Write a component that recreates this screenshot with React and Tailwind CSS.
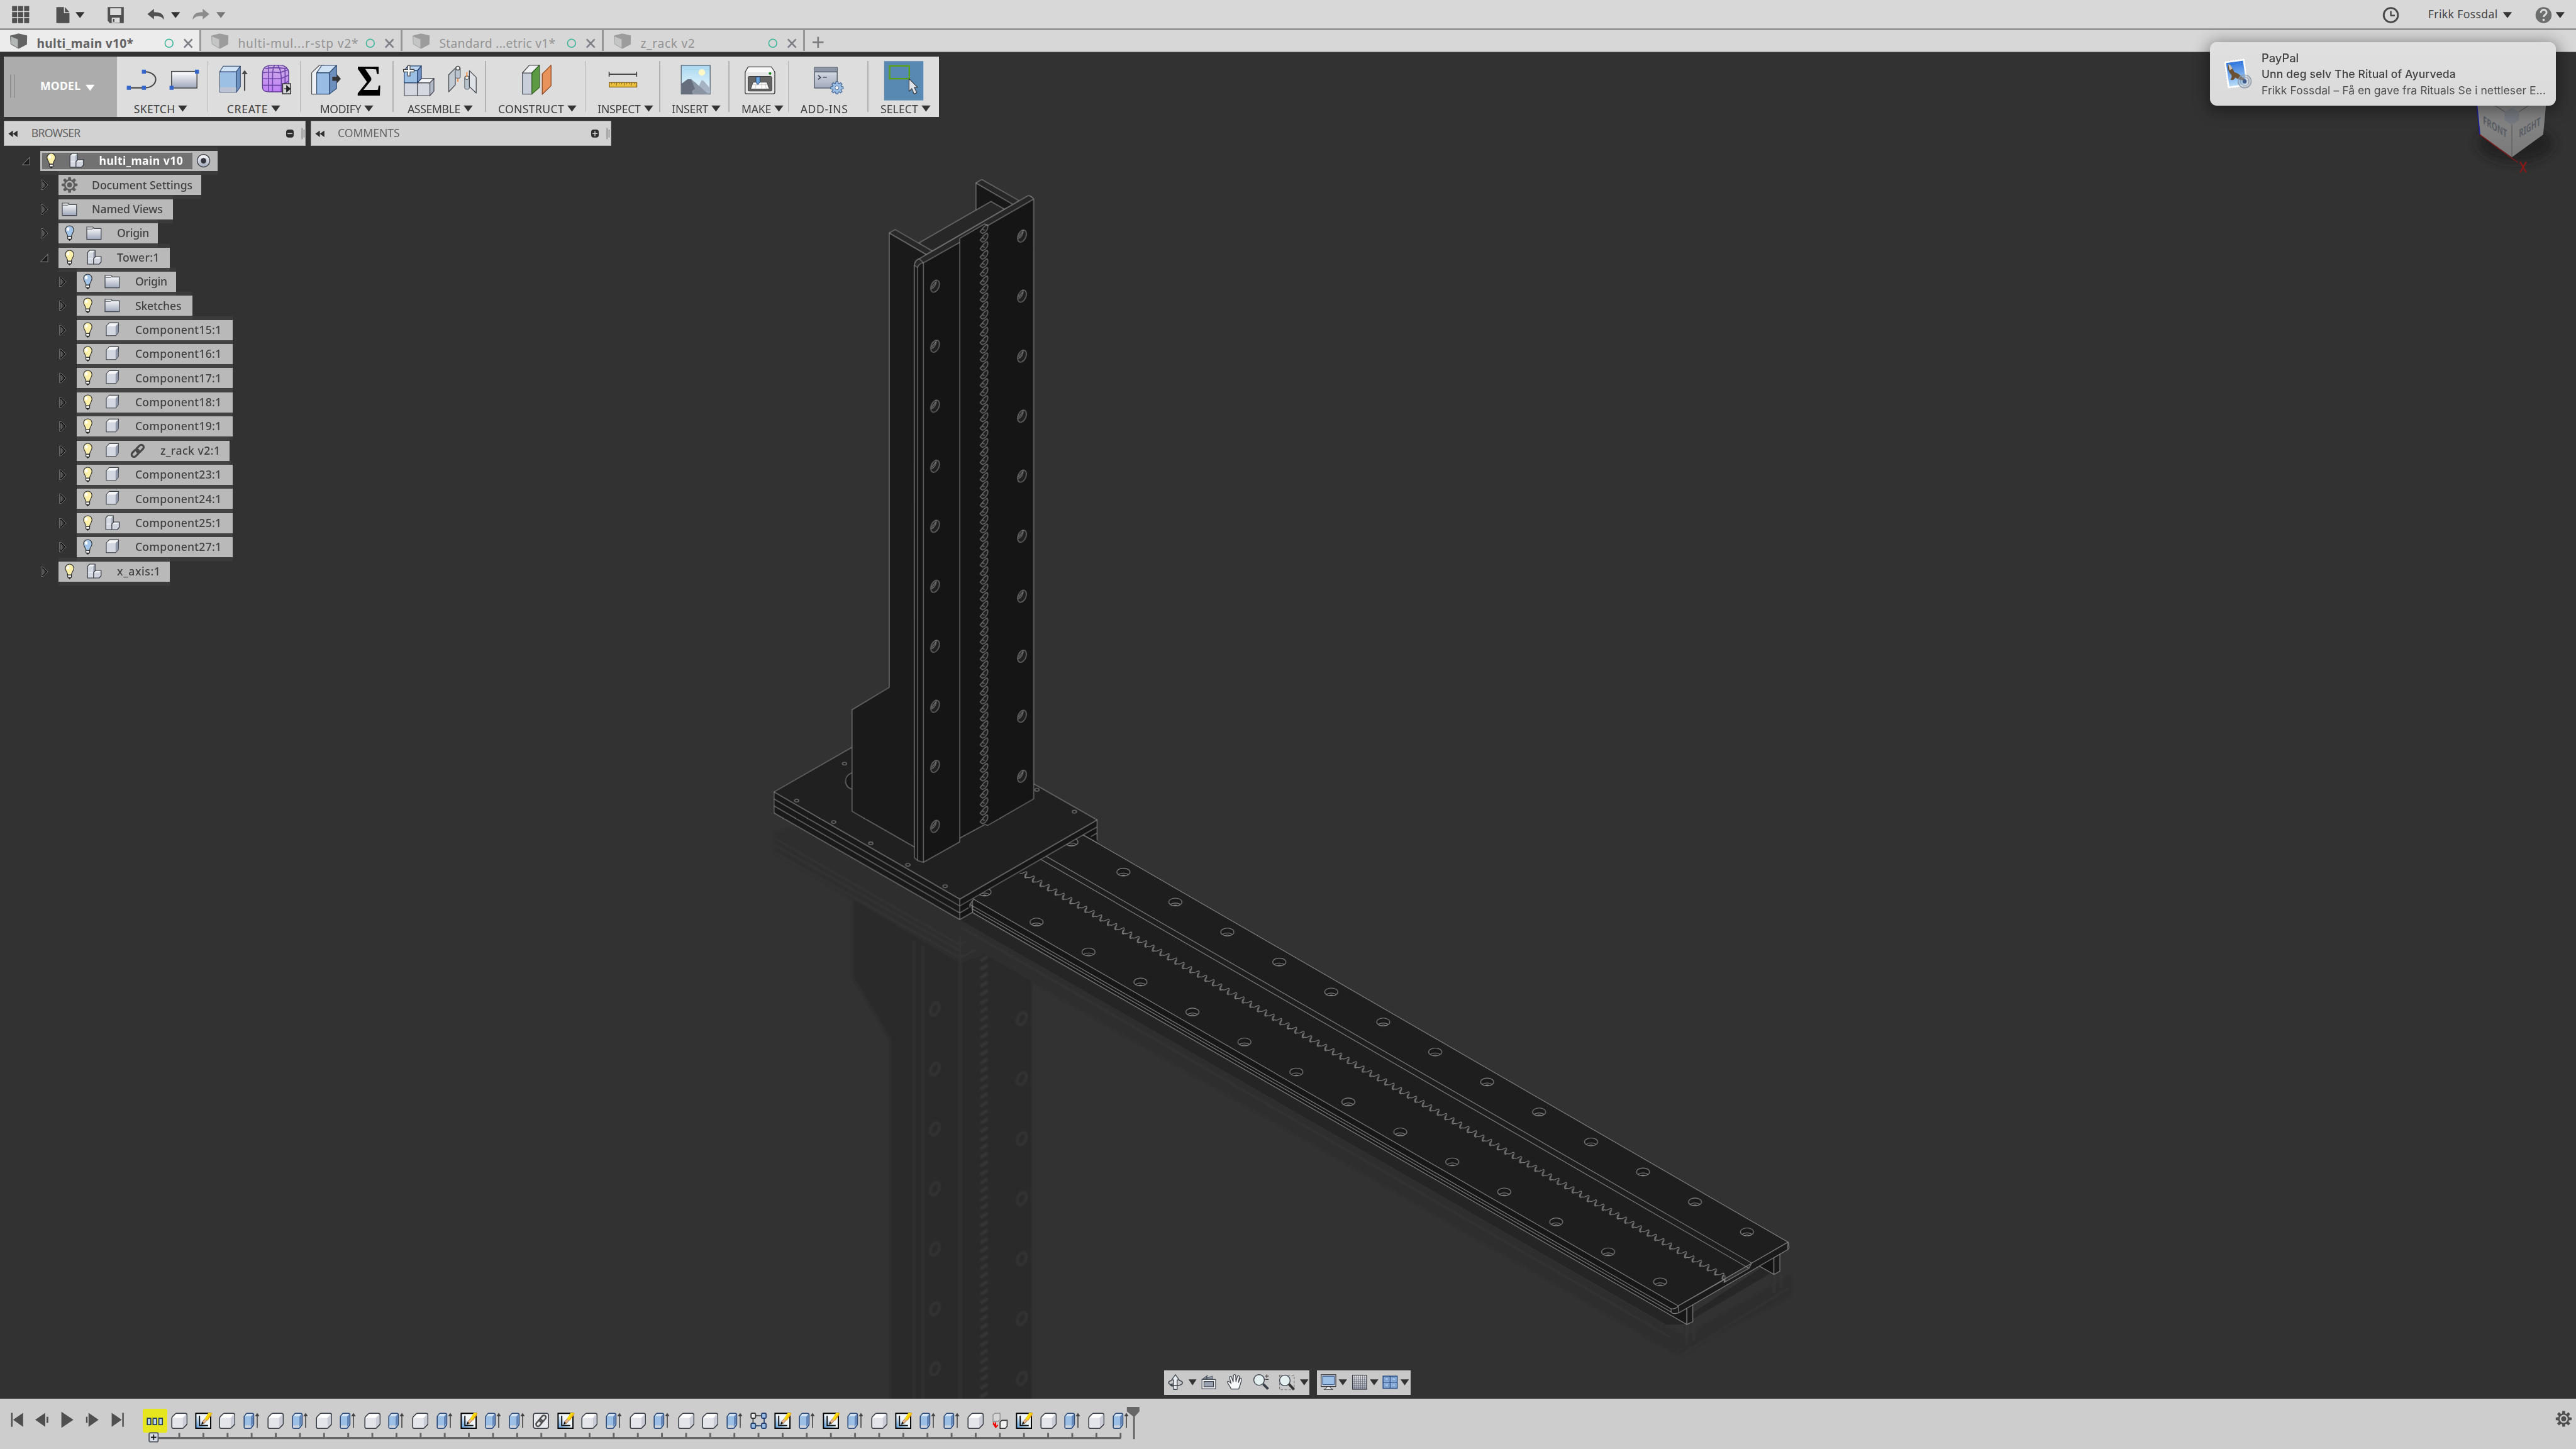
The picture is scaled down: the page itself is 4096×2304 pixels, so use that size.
import React, { useLayoutEffect, useRef, useState } from "react";

const S = 0.8;

/* Vector drawing on the 5120-wide design grid, shown at 0.8. */
function Art({ x = 0, y = 0, w, h, className = "", children }) {
  return (
    <svg
      width={w * S}
      height={h * S}
      viewBox={`${x} ${y} ${w} ${h}`}
      className={"block shrink-0 overflow-visible " + className}
      fill="none"
    >
      {children}
    </svg>
  );
}

/* Text tracked so that it spans a given design width. */
function Fit({ w, className = "", children }) {
  const ref = useRef(null);
  const [ls, setLs] = useState(null);
  useLayoutEffect(() => {
    const nat = ref.current.getBoundingClientRect().width;
    setLs((w * S - nat) / Math.max(1, children.length - 1));
  }, []);
  return (
    <span
      ref={ref}
      className={"inline-block shrink-0 whitespace-nowrap leading-none " + className}
      style={ls === null ? undefined : { letterSpacing: ls + "px", width: w * S + "px" }}
    >
      {children}
    </span>
  );
}

const Tri = ({ x, y, w = 18, h = 12, c = "#333" }) => (
  <path d={`M${x} ${y}h${w}l${-w / 2} ${h}z`} fill={c} />
);

/* ---------- header ---------- */

function Header() {
  return (
    <div className="flex h-[48px] items-start border-b-[3.2px] border-[#969696] bg-[#d8d8d8]">
      <Art x={0} y={0} w={90} h={56}>
        {[0, 1, 2].map((r) =>
          [0, 1, 2].map((c) => (
            <rect key={r + "-" + c} x={24 + c * 12} y={12 + r * 12} width="10" height="10" fill="#505050" />
          ))
        )}
      </Art>
      <Art x={90} y={0} w={100} h={56}>
        <path d="M112 14h15v12h11v20h-26z" fill="#505050" />
        <path d="M129 14l9 10h-9z" fill="#505050" />
        <Tri x={150} y={24} />
      </Art>
      <Art x={190} y={0} w={80} h={56}>
        <path d="M214 14h32v32h-28l-4-5z" fill="#505050" />
        <rect x="219" y="16.500" width="22" height="13.500" fill="#dcdcdc" />
        <rect x="222" y="35" width="16" height="10" fill="#dcdcdc" />
        <rect x="224.500" y="37.500" width="3" height="6" fill="#505050" />
      </Art>
      <Art x={270} y={0} w={100} h={56}>
        <path d="M293 28l13-10.500v6.500c13 0 20 4 20 15.500c-4-6-9-8-20-7.500v6.500z" fill="#505050" />
        <Tri x={340} y={24} />
      </Art>
      <Art x={370} y={0} w={100} h={56}>
        <path d="M416 28l-13-10.500v6.500c-13 0-20 4-20 15.500c4-6 9-8 20-7.500v6.500z" fill="#8c8c8c" />
        <Tri x={430} y={24} c="#777" />
      </Art>
      <div className="ml-auto flex h-[44.8px] items-center">
        <Art x={4720} y={0} w={106} h={56}>
          <circle cx="4752" cy="30" r="14.200" stroke="#4a4a4a" strokeWidth="3.600" />
          <path d="M4752 22v9h8" stroke="#4a4a4a" strokeWidth="3" />
        </Art>
        <Fit w={138} className="mt-[1.600px] text-[17.600px] text-[#454545]">Frikk Fossdal</Fit>
        <Art x={4964} y={0} w={64} h={56}>
          <Tri x={4975} y={24} />
        </Art>
        <Art x={5028} y={0} w={92} h={56}>
          <circle cx="5056" cy="30" r="16" fill="#6c6e6d" />
          <path d="M5050.500 25.500c0-8 11.500-8 11.500-.8c0 4.800-5.800 4.500-5.800 9" stroke="#dcdcdc" strokeWidth="3.600" />
          <circle cx="5056.200" cy="39.500" r="2.400" fill="#dcdcdc" />
          <Tri x={5080} y={24} />
        </Art>
      </div>
    </div>
  );
}

const TABS = [
  { t: "hulti_main v10*", w: 192, on: true },
  { t: "hulti-mul...r-stp v2*", w: 239 },
  { t: "Standard ...etric v1*", w: 231 },
  { t: "z_rack v2", w: 108 },
];

function Tabs() {
  return (
    <div className="flex h-[35.200px] border-b-[1px] border-[#f4f4f4] bg-[#d7d7d7]">
      {TABS.map((t) => (
        <div
          key={t.t}
          className={
            "flex w-[320px] items-start border-r-[3px] border-b border-[#979797] " +
            (t.on ? "bg-[#ececec]" : "bg-[#d7d7d7]")
          }
        >
          <Art x={0} y={60} w={73} h={40} className={t.on ? "" : "opacity-50"}>
            <path d="M20 71l17-4.500l17 4l-.5 18l-16.500 8.500l-15.500-9z" fill="#636363" />
            <path d="M21 72l15 6v18l-14.500-8.500z" fill="#b3b7b6" stroke="#6c6c6c" strokeWidth="1" />
          </Art>
          <Fit
            w={t.w}
            className={"mt-[11px] text-[19.200px] " + (t.on ? "font-bold text-[#636363]" : "text-[#939393]")}
          >
            {t.t}
          </Fit>
          <Art x={320} y={60} w={76} h={40} className="ml-auto">
            <circle cx="336" cy="86" r="8" stroke="#3fb79b" strokeWidth="2" />
            <path d="M366 78l16 16.500M382 78l-16 16.500" stroke="#7f7f88" strokeWidth="3.400" />
          </Art>
        </div>
      ))}
      <div className="flex-1 border-b border-[#979797]">
        <Art x={1600} y={60} w={60} h={40}>
          <path d="M1615 84h22M1626 73v22" stroke="#7f7f83" strokeWidth="3.400" />
        </Art>
      </div>
    </div>
  );
}

/* ---------- toolbar ---------- */

function Group({ x, w, label, lw, pad, tri, art, last }) {
  return (
    <div className="flex h-[96px]">
      <div className="flex flex-col">
        <Art x={x} y={112} w={last ? w : w - 2} h={92}>{art}</Art>
        <div className={"flex h-[20.800px] items-center " + pad}>
          <Fit w={lw} className="text-[17.600px] text-[#3d3d3d]">{label}</Fit>
          {tri && (
            <Art x={0} y={0} w={25} h={26}>
              <Tri x={6.500} y={6} />
            </Art>
          )}
        </div>
      </div>
      {!last && <div className="my-[7.200px] w-[1.600px] bg-[#b2b2b2]" />}
    </div>
  );
}

const sketchArt = (
  <>
    <path d="M255 174h32c14 0 22-8 22-17s-10-15-24-15" stroke="#484848" strokeWidth="2.600" />
    <rect x="340.500" y="141.500" width="50.500" height="33" fill="url(#gPaper)" stroke="#444" strokeWidth="1.800" />
    <g fill="#3466cc">
      <rect x="281.500" y="138" width="8" height="8" />
      <rect x="281.500" y="170" width="8" height="8" />
      <rect x="251.500" y="170" width="8" height="8" />
      <rect x="387" y="138" width="8" height="8" />
      <rect x="336.500" y="170" width="8" height="8" />
    </g>
  </>
);

const createArt = (
  <>
    <g stroke="#3b4d68" strokeWidth="1.300" strokeLinejoin="round">
      <path d="M437 142h33v41h-33z" fill="#9cbfe4" />
      <path d="M437 142l7-11h34l-8 11z" fill="#cfe2f4" stroke="#22406e" />
      <path d="M470 142l8-11v41l-8 11z" fill="#6f92c0" stroke="#22406e" />
    </g>
    <path d="M437.500 173h32v9.500h-32z" fill="#bcc3d2" />
    <path d="M486.500 180v-36" stroke="#484848" strokeWidth="2.600" />
    <path d="M480.500 147l6-8l6 8z" fill="#484848" />
    <path d="M522 147c0-13 6-18 22-18h12c12 0 18 8 18 16v28c0 7-5 9-12 9h-26c-11 0-14-3-14-11z" fill="url(#gPurple)" stroke="#5d3d92" strokeWidth="1.800" />
    <path d="M522 144c16-2 26-1 34 0l18-6M522 156h36l16-7M523 169h36l14-8M534 131v50M546 129c-5 7-4 25-4 53M552 129c8 10 8 25 7 53M566 134c2 10 1 25 0 44M527 136c12-3 30-2 44 0" stroke="#6c43a8" strokeWidth="2" />
    <rect x="562" y="166" width="16" height="20" fill="#d6d6d6" stroke="#333" strokeWidth="2" />
    <path d="M565 176h5v-6l7 6l-7 6v-6" fill="#222" stroke="#222" strokeWidth="1.500" />
  </>
);

const modifyArt = (
  <>
    <g stroke="#2c4770" strokeWidth="1.400" strokeLinejoin="round">
      <path d="M620 144l15-14.500h10l-15 14.500v42.500h-10z" fill="#eef1f5" stroke="#4a4a4a" />
      <path d="M630 144h25v42.500h-25z" fill="#98bce3" />
      <path d="M630 144l10-14.500h29.500l-14.500 14.500z" fill="#cfe2f4" />
      <path d="M655 144l14.500-14.500v46l-14.500 11z" fill="#6c8fbe" />
    </g>
    <path d="M661 152h9v-5l8 9l-8 9v-5h-9z" fill="#333" />
    <text x="709" y="190" fontSize="88" fontWeight="700" textLength="51" lengthAdjust="spacingAndGlyphs" fill="#000" fontFamily='"Liberation Serif", serif'>Σ</text>
  </>
);

const assembleArt = (
  <>
    <g strokeWidth="1.500" strokeLinejoin="round">
      <path d="M803 164h26v25.500h-26z" fill="#d4d7e0" stroke="#40444c" />
      <path d="M829 164h25v25.500h-25z" fill="#d4d7e0" stroke="#40444c" />
      <path d="M829 164l8-8.500h25l-8 8.500z" fill="#f4f5f7" stroke="#40444c" />
      <path d="M854 164l8-8.500v25l-8 9z" fill="#b3b9c6" stroke="#40444c" />
      <path d="M803 140l7-9.500h27l-8 9.500z" fill="#bdd5ef" stroke="#23406e" />
      <path d="M803 140h26v24h-26z" fill="#9cbfe4" stroke="#23406e" />
      <path d="M829 140l8-9.500v25l-8 8.500z" fill="#7293c4" stroke="#23406e" />
      <path d="M810 130h4.500v7.500h8v5h-8v8h-4.500v-8h-8.500v-5h8.500z" fill="#fff" stroke="#444" />
      <path d="M891.500 148l13-13v33l-13 14z" fill="#c4cad2" stroke="#3e434a" />
      <rect x="904.500" y="132" width="10" height="23" rx="4" fill="#b9c3cd" stroke="#6a7076" />
      <circle cx="909.500" cy="135" r="3.800" fill="#fff" stroke="#4a4a4a" />
      <rect x="923" y="151" width="9.500" height="26" rx="4" fill="#b9c3cd" stroke="#6a7076" />
      <circle cx="927.500" cy="154" r="3.500" fill="#fff" stroke="#6a6a6a" />
      <path d="M932.500 140l13.500 13.500v31l-13.500-13z" fill="#dfe3e8" stroke="#3e434a" />
    </g>
    <path d="M909.500 156v6M927.500 143v10" stroke="#ff7a14" strokeWidth="1.800" />
  </>
);

const constructArt = (
  <g strokeWidth="1.500" strokeLinejoin="round">
    <path d="M1038 144.500h19v42h-19z" fill="#c9cedb" stroke="#555a63" />
    <path d="M1038 144.500l14-15.500h20l-15 15.500z" fill="#f0f1f4" stroke="#444" />
    <path d="M1057 144.500l15-15.500v44l-15 13.500z" fill="#5c9b43" stroke="#2f5f20" />
    <path d="M1077.500 146.500l17.500-17.500v41l-17.500 17z" fill="#e8935c" stroke="#8b451b" />
  </g>
);

const inspectArt = (
  <>
    <path d="M1211 142v10M1265.500 142v10M1211 147h54" stroke="#484848" strokeWidth="2.200" />
    <rect x="1211" y="163.500" width="55" height="9" fill="#eac03c" stroke="#7b5a12" strokeWidth="1.500" />
    <path d="M1216 164v3M1221 164v3M1226 164v5M1231 164v3M1236 164v3M1241 164v5M1246 164v3M1251 164v3M1256 164v5M1261 164v3" stroke="#7b5a12" strokeWidth="1.200" />
  </>
);

const insertArt = (
  <>
    <rect x="1353.500" y="129.500" width="57.500" height="57" fill="url(#gSky)" stroke="#53606e" strokeWidth="1.500" />
    <circle cx="1394.500" cy="143.500" r="6.500" fill="#fff7c4" />
    <path d="M1388 172l6-13l4 1l13 15v11h-23z" fill="#a5b3c2" />
    <path d="M1354 166l12-9h7l10 8l24 22h-53z" fill="#666d7c" />
    <path d="M1373 157l10 8l24 22h-30c-4-6-2-8 4-11z" fill="#8b94a3" />
  </>
);

const makeArt = (
  <>
    <path d="M1481 143l6-10.500h46l7 10.500v40q0 3-3 3h-53q-3 0-3-3z" fill="#e6e6e6" stroke="#3d3d3d" strokeWidth="1.700" />
    <path d="M1482 143l6-9.500h45l6 9.500z" fill="#f8f8f8" />
    <circle cx="1530.500" cy="145.500" r="2.600" fill="#158a1c" />
    <rect x="1487" y="151.500" width="47" height="29" rx="3" fill="#646464" stroke="#3d3d3d" strokeWidth="1.300" />
    <path d="M1497 163h27l5 13.500h-37z" fill="#fff" stroke="#333" strokeWidth="1" />
    <path d="M1504 163l-3 13M1514 163v13M1520 163l3 13M1495 168h31" stroke="#bbb" strokeWidth="1" />
    <path d="M1502.500 152.500h8v10l-4 5l-4-5z" fill="#6aa2dc" stroke="#23406e" strokeWidth="1.200" />
  </>
);

const gearPath = (cx, cy, r1, r2, n) => {
  let d = "";
  for (let i = 0; i < n; i++) {
    const a = (i / n) * Math.PI * 2;
    const s = Math.PI / n;
    [[r1, -0.75], [r2, -0.42], [r2, 0.42], [r1, 0.75]].forEach(([r, k], j) => {
      const px = cx + r * Math.sin(a + k * s);
      const py = cy - r * Math.cos(a + k * s);
      d += (i === 0 && j === 0 ? "M" : "L") + px.toFixed(2) + " " + py.toFixed(2);
    });
  }
  return d + "Z";
};

const addinsArt = (
  <>
    <rect x="1619.500" y="133.500" width="45" height="41" fill="url(#gWin)" stroke="#4b5260" strokeWidth="1.600" />
    <rect x="1620" y="134" width="44" height="8" fill="#8d97a8" />
    <path d="M1619.500 142.500h45" stroke="#3f4653" strokeWidth="1.400" />
    <path d="M1626.500 149.500l5 4l-5 4M1636 153h8" stroke="#3c4350" strokeWidth="2" />
    <path d={gearPath(1664, 174, 9, 12.500, 8)} fill="#9dbfe6" stroke="#41648f" strokeWidth="1.500" />
    <circle cx="1664" cy="174" r="3.800" fill="#fff" stroke="#41648f" strokeWidth="1.200" />
  </>
);

const selectArt = (
  <>
    <rect x="1757" y="121" width="78" height="78" fill="#5889b3" />
    <rect x="1768" y="130.500" width="39" height="25.500" stroke="#5aa30e" strokeWidth="2.800" />
    <path d="M1806.500 156l17 17h-6.500l5 11l-5.500 2.500l-4.500-11l-5.500 5.500z" fill="#dfe3ea" stroke="#333" strokeWidth="1.400" strokeLinejoin="round" />
  </>
);

function Toolbar() {
  return (
    <div className="relative ml-[6.400px] mt-[6.400px] flex h-[96px] w-[1486.400px] bg-[#dddddd]">
      <svg width="0" height="0" className="absolute">
        <defs>
          <linearGradient id="gPaper" x1="0" y1="0" x2="0" y2="1"><stop offset="0" stopColor="#fff" /><stop offset="1" stopColor="#9fa7ba" /></linearGradient>
          <linearGradient id="gPurple" x1="0" y1="0" x2="0" y2="1"><stop offset="0" stopColor="#cdb0e4" /><stop offset="1" stopColor="#c07ef8" /></linearGradient>
          <linearGradient id="gSky" x1="0" y1="0" x2="0" y2="1"><stop offset="0" stopColor="#a9d8f1" /><stop offset="1" stopColor="#eef8fd" /></linearGradient>
          <linearGradient id="gWin" x1="0" y1="0" x2="0" y2="1"><stop offset="0" stopColor="#dfe3ec" /><stop offset="1" stopColor="#a2aabb" /></linearGradient>
          <linearGradient id="gArrow" x1="0" y1="0" x2="1" y2="0"><stop offset="0" stopColor="#6a6a6a" /><stop offset="1" stopColor="#222" /></linearGradient>
        </defs>
      </svg>
      <div className="flex h-full w-[179.200px] items-center bg-[#acacac]">
        <Art x={8} y={112} w={72} h={120}>
          <path d="M21.500 148v46M29 148v46" stroke="#868686" strokeWidth="1.600" />
        </Art>
        <Fit w={80} className="mb-[0.800px] text-[17.600px] font-bold text-white">MODEL</Fit>
        <Art x={160} y={112} w={40} h={120}>
          <Tri x={170} y={168} c="#fff" />
        </Art>
      </div>
      <Group x={232} w={182} label="SKETCH" lw={82} pad="pl-[27.200px]" tri art={sketchArt} />
      <Group x={414} w={184} label="CREATE" lw={81} pad="pl-[29.600px]" tri art={createArt} />
      <Group x={598} w={184} label="MODIFY" lw={82} pad="pl-[30.400px]" tri art={modifyArt} />
      <Group x={782} w={184} label="ASSEMBLE" lw={105.500} pad="pl-[22.400px]" tri art={assembleArt} />
      <Group x={966} w={198} label="CONSTRUCT" lw={131} pad="pl-[19.200px]" tri art={constructArt} />
      <Group x={1164} w={148} label="INSPECT" lw={85.500} pad="pl-[19.200px]" tri art={inspectArt} />
      <Group x={1312} w={138} label="INSERT" lw={72.500} pad="pl-[18.800px]" tri art={insertArt} />
      <Group x={1450} w={118} label="MAKE" lw={59} pad="pl-[19.200px]" tri art={makeArt} />
      <Group x={1568} w={158} label="ADD-INS" lw={94} pad="pl-[18.400px]" art={addinsArt} />
      <Group x={1726} w={140} label="SELECT" lw={75} pad="pl-[19.200px]" tri art={selectArt} last />
    </div>
  );
}

/* ---------- panels and tree ---------- */

function PanelHead({ title, tw, plus, wide }) {
  return (
    <div
      className={
        "flex h-[40px] items-center border-[1.600px] border-[#a9a9a9] bg-[#d2d2d2] " +
        (wide ? "w-[480px]" : "w-[478.400px]")
      }
    >
      <Art x={0} y={0} w={53} h={46}>
        <path d="M17 17v13l-9-6.500zM26 17v13l-9-6.500z" fill="#2f2f2f" />
      </Art>
      <Fit w={tw} className="mb-[0.800px] text-[17.600px] text-[#636363]">{title}</Fit>
      <Art x={-2.500} y={0} w={46} h={46} className="ml-auto">
        <rect x="5" y="15" width="15" height="16" rx="5" fill="#2e2e2e" />
        <path d={plus ? "M7.500 23h10M12.500 18v10" : "M7.500 23h10"} stroke="#d2d2d2" strokeWidth="1.800" />
        <path d="M36.500 12v22M40.500 15v16" stroke="#777" strokeWidth="1.600" />
      </Art>
    </div>
  );
}

const Bulb = ({ cx, on, top = 5 }) => (
  <g transform={`translate(${cx} ${top})`}>
    <path d="M-3.700 21.500v4.500l3.700 3l3.700-3v-4.500z" fill="#fff" stroke="#222" strokeWidth="1.400" />
    <path d="M-2.500 26h5l-2.500 2.500z" fill="#111" />
    <path d="M-8.300 8.300a8.300 8.300 0 0 1 16.600 0c0 5-4.300 7.500-4.600 13h-7.400c-.3-5.500-4.600-8-4.600-13z" fill={on ? "#fff0aa" : "#a3c6ea"} stroke="#2b2b2b" strokeWidth="1.400" />
    <ellipse cx="-3" cy="6.500" rx="2.700" ry="3.500" fill="#fff" />
  </g>
);

const Asm = () => (
  <g strokeLinejoin="round">
    <path d="M11.500 9.500l4-4.500h11v13.500l-3.500 4v10h-11.500z" fill="#d3d8e1" />
    <path d="M12 9.500l4-4h10l-4 4z" fill="#f4f5f7" />
    <path d="M22.500 9.500l4-4v13l-4 3.500z" fill="#a9b0bf" />
    <path d="M11.500 21.500h11" stroke="#f4f5f7" strokeWidth="1.300" />
    <path d="M23.500 21.500l4-4h11v10.500l-4 4.500h-11z" fill="#cfd4de" />
    <path d="M24 21.500l4-3.500h10l-3.500 3.500z" fill="#f4f5f7" />
    <path d="M11.500 32.500v-23l4-4.500h11v12.500h12v10.500l-4 4.500zM23.500 32.500v-11l4-4" stroke="#33373e" strokeWidth="1.500" />
  </g>
);

const glyphs = {
  gear: (
    <>
      <path d={gearPath(22, 20, 11, 16, 8)} fill="#5d5d5d" />
      <circle cx="22" cy="20" r="6.500" stroke="#b9b9b9" strokeWidth="3" />
    </>
  ),
  folder: (
    <>
      <path d="M10 32v-24.500h12l3 3h13.500v21.500z" fill="url(#gPaper)" stroke="#3f434b" strokeWidth="1.500" />
      <path d="M10.500 11.500h10l3-1.500" stroke="#3f434b" strokeWidth="1.200" />
    </>
  ),
  asm: <Asm />,
  cube: (
    <g stroke="#3a3e45" strokeWidth="1.400" strokeLinejoin="round">
      <path d="M12.500 12l6-6.500h18.500l-.500 19-5.500 6.500h-18.500z" fill="#d3d8e1" />
      <path d="M13.200 12l5.500-5.800h17.600l-5.300 5.800z" fill="#f4f5f7" stroke="none" />
      <path d="M31 12l5.400-5.500v18l-5.400 6z" fill="#8f97a8" stroke="none" />
    </g>
  ),
  link: (
    <g stroke="#484848" strokeWidth="4" fill="none" transform="rotate(-45 25 20)">
      <rect x="10" y="15" width="17" height="9.500" rx="4.700" />
      <rect x="23" y="15" width="17" height="9.500" rx="4.700" />
    </g>
  ),
};

const Arrow = ({ open }) => (
  <Art x={0} y={0} w={36} h={40}>
    {open ? (
      <>
        <path d="M1 27.500l14-14.500v14.500z" fill="#0c0c0c" stroke="#7c7c7c" strokeWidth="1.300" />
        <path d="M5 26l8.500-9v9z" fill="#1e1e1e" />
      </>
    ) : (
      <>
        <path d="M2 10.500h3.500l9.500 9.500l-9.500 9.500h-3.500z" fill="#0c0c0c" stroke="#7c7c7c" strokeWidth="1.200" />
        <path d="M4 12.500l8.500 7.500l-8.500 7.500z" fill="url(#gArrow)" />
      </>
    )}
  </Art>
);

/* lv, row width, icons, label, label width */
const ROWS = [
  [1, "w-[227.200px]", ["gear"], "Document Settings", 200],
  [1, "w-[182.400px]", ["folder0"], "Named Views", 141],
  [1, "w-[158.400px]", ["off", "folder"], "Origin", 64],
  [1, "w-[177.600px]", ["on", "asm"], "Tower:1", 84, true],
  [2, "w-[158.400px]", ["off", "folder"], "Origin", 64],
  [2, "w-[184px]", ["on", "folder"], "Sketches", 92],
  ...["15", "16", "17", "18", "19"].map((n) => [2, "w-[248px]", ["on", "cube"], `Component${n}:1`, 171.500]),
  [2, "w-[243.200px]", ["on", "cube", "link"], "z_rack v2:1", 119],
  [2, "w-[248px]", ["on", "cube"], "Component23:1", 171.500],
  [2, "w-[248px]", ["on", "cube"], "Component24:1", 171.500],
  [2, "w-[248px]", ["on", "asm"], "Component25:1", 171.500],
  [2, "w-[248px]", ["off", "cube"], "Component27:1", 171.500],
  [1, "w-[177.600px]", ["on", "asm"], "x_axis:1", 86],
];

const halo = "shadow-[0_6.4px_0_0_rgba(255,255,255,0.045),0_-6.4px_0_0_rgba(255,255,255,0.045)]";

function Cell({ kind }) {
  if (kind === "on" || kind === "off")
    return (
      <Art w={47} h={40}>
        <Bulb cx={22} on={kind === "on"} />
      </Art>
    );
  if (kind === "gear") return <Art w={47} h={40}>{glyphs.gear}</Art>;
  if (kind === "folder0") return <Art x={2.500} w={47} h={40}>{glyphs.folder}</Art>;
  return <Art w={50} h={40}>{glyphs[kind]}</Art>;
}

function Tree() {
  return (
    <div className="mt-[8px] flex flex-col gap-[6.400px]">
      <div className="flex pl-[35.200px]">
        <Arrow open />
        <div className={"flex h-[32px] w-[281.600px] items-center bg-[#b9b9b9] " + halo}>
          <div className="ml-[3.200px] flex h-[25.600px] w-[238.400px] items-center bg-[#717171]">
            <Art x={4} y={4} w={43} h={32}>
              <Bulb cx={22} on />
            </Art>
            <Art y={4} w={50} h={32}>{glyphs.asm}</Art>
            <Fit w={166.500} className="ml-[16px] text-[17.600px] font-bold text-white">hulti_main v10</Fit>
          </div>
          <Art x={0} y={0} w={44} h={40}>
            <circle cx="22" cy="19.500" r="12.500" fill="url(#gPaper)" stroke="#3c3f45" strokeWidth="1.600" />
            <circle cx="22" cy="19.500" r="5.500" fill="#33363c" />
          </Art>
        </div>
      </div>
      {ROWS.map(([lv, width, icons, label, lw, open], i) => (
        <div key={i} className={"flex " + (lv === 1 ? "pl-[64px]" : "pl-[92.800px]")}>
          <Arrow open={open} />
          <div className={"flex h-[32px] items-center bg-[#b9b9b9] " + width + " " + halo}>
            {icons.map((k) => (
              <Cell key={k} kind={k} />
            ))}
            <Fit w={lw} className="ml-[15.700px] text-[17.600px] font-medium text-[#414141]">{label}</Fit>
          </div>
        </div>
      ))}
    </div>
  );
}

/* ---------- 3D model ---------- */

const range = (n) => Array.from({ length: n }, (_, i) => i);
const rackZ = range(70)
  .map((i) => 446.5 + i * 17)
  .map((y) => `M1948 ${y + 14}l8.500-10.500l5.500-3.500l1.500 3.500l-1 6l-4.500 6l-5.500 2.500zM1952 ${y + 9}l5 2.500`)
  .join("");
const rackX = range(94)
  .map((i) => {
    const x = 2027 + i * 14.9;
    const y = 1735.5 + i * 8.58;
    return `${i ? "L" : "M"}${x.toFixed(1)} ${y.toFixed(1)}q3 1.500 7-.500t6-2.500q2 2-.500 7t1 5`;
  })
  .join("");
const rackXin = range(94)
  .map((i) => `M${(2039.5 + i * 14.9).toFixed(1)} ${(1736.5 + i * 8.58).toFixed(1)}q-3 2-2.500 8l3 1.500`)
  .join("");

const HoleV = ({ x, y }) => (
  <g transform={`translate(${x} ${y})`}>
    <ellipse rx="7.800" ry="12.700" transform="rotate(24)" fill="#202020" />
    <path d="M2 -11.500c1 6-3 14-9.500 16.500M-7 2l8-10" />
  </g>
);
const HoleH = ({ x, y }) => (
  <g transform={`translate(${x} ${y})`}>
    <ellipse rx="13" ry="7.800" fill="#181818" />
    <path d="M-9.500 5c3-4 16-4 19 0M-4 7.500q4-3 8 0" />
  </g>
);
const Screw = ({ x, y }) => <ellipse cx={x} cy={y} rx="4.300" ry="2.700" fill="#181818" />;

function Model() {
  return (
    <svg className="absolute inset-0 block h-full w-full" viewBox="0 104 5120 2676" preserveAspectRatio="none" fill="none">
      <defs>
        <filter id="soft" x="-5%" y="-5%" width="110%" height="110%"><feGaussianBlur stdDeviation="2" /></filter>
        <filter id="shade" x="-50%" y="-50%" width="200%" height="200%"><feGaussianBlur stdDeviation="9" /></filter>
        <linearGradient id="gCube" x1="0" y1="0" x2="0" y2="1"><stop offset="0" stopColor="#8a8a8a" /><stop offset="1" stopColor="#7a7a7a" /></linearGradient>
      </defs>

      {/* floor reflection */}
      <g filter="url(#soft)">
        <path d="M1695 1780V1942L1770 2068V2820H2053V1950L1908 1860z" fill="#2c2c2c" />
        <path d="M1540 1655L1600 1640L1908 1830L2010 1880L1908 1915L1540 1696z" fill="#2e2e2e" />
        <path d="M1540 1667L1908 1878L1940 1862M1540 1680L1908 1890M1540 1694L1908 1904L1945 1885" stroke="#343434" strokeWidth="4" />
        <path d="M1817 1870V2820M1834 1880V2820M1908 1860V2820M2053 1950V2820" stroke="#323232" strokeWidth="5" />
        <g stroke="#363636" strokeWidth="4">
          {range(7).map((i) => (
            <g key={i}>
              <ellipse cx="1858" cy={2005.6 + i * 119.2} rx="8" ry="13" transform={`rotate(24 1858 ${2005.6 + i * 119.2})`} />
              <ellipse cx="2031" cy={2025 + i * 119.2} rx="8" ry="13" transform={`rotate(24 2031 ${2025 + i * 119.2})`} />
            </g>
          ))}
        </g>
        <path d={range(53).map((i) => `M1949 ${1910 + i * 17}l14-9`).join("")} stroke="#373737" strokeWidth="5" />
        <path d="M1910 1828L3352 2660L3330 2690L1920 1876z" fill="#2d2d2d" />
        <path d="M3352 2655L3560 2535L3560 2575L3336 2692z" fill="#2d2d2d" />
        <path d="M1910 1843L3320 2658M3345 2690L3556 2560" stroke="#333333" strokeWidth="5" />
        <path d="M3352 2632V2672M3366 2632V2665M3526 2535V2570M3540 2530V2560" stroke="#363636" strokeWidth="4" />
      </g>
      <path d="M1925 1812L3352 2632L3312 2633L1905 1826z" fill="#252525" />
      <path d="M3364 2610L3500 2520L3520 2530L3364 2622z" fill="#272727" />

      <g stroke="#8a8a8a" strokeWidth="1.350" strokeLinejoin="round">
        {/* x axis */}
        <path d="M3497 2516.700L3525.700 2533V2495z" fill="#141414" />
        <path d="M3525.700 2500V2533.300L3537.600 2526.700V2492.700z" fill="#1a1a1a" />
        <path d="M1932.800 1813.800L3352.700 2632.700V2598L1932.800 1780z" fill="#171717" />
        <path d="M3352.700 2600V2632.700L3364.500 2627V2592.700z" fill="#1a1a1a" />
        <path d="M1900 1767.200L3335.500 2595.700L3553.900 2469L2110 1634.800z" fill="#1e1e1e" />
        <path d="M3335.500 2595.700L3427.800 2543.500L3426.500 2549.300L3476.300 2521L3481.600 2510.700L3553.900 2469L3556 2480.700L3553 2484L3336.300 2610L3328.600 2611Q3323 2611 3321.600 2608V2601.700Q3332 2602 3335.500 2595.700z" fill="#1a1a1a" />
        <path d="M3335.500 2595.700L3336.300 2610M3553.900 2469L3553 2484M1927.500 1797.600L3321.600 2601.700M1932.800 1806.800L3321.600 2608M2045 1682.400L3481.600 2510.700M2040 1691.800L3476.300 2521" />
        <path d={rackX} />
        <path d={rackXin} />
        <path d="M3428.600 2535V2549" />
        {range(14).map((i) => (
          <g key={i}>
            <HoleH x={3472.2 - 103.28 * i} y={2448.7 - 59.6 * i} />
            <HoleH x={3299.6 - 103.28 * i} y={2548 - 59.6 * i} />
          </g>
        ))}

        {/* base */}
        <path d="M1907.600 1787.300V1827.800L1932.800 1813.500L1927.500 1797.600L1936 1785L1920 1780z" fill="#141414" stroke="none" />
        <path d="M2152 1659L2165 1650L2180.500 1642V1675z" fill="#141414" stroke="none" />
        <path d="M2180.500 1643.700V1670.600M2180.500 1656L2168 1663M2152 1659L2180.500 1675M1936 1786L1927.500 1797.600V1804M1932.800 1800V1813.500L1907.600 1827.800" />
        <path d="M1907.600 1787.300L2180.500 1629.800V1643.700L1907.600 1800.800z" fill="#161616" />
        <path d="M1538.300 1574.300L1810 1418.700L2180.500 1629.800L1907.600 1787.300z" fill="#202020" />
        <path d="M1538.300 1574.300V1616L1907.600 1827.800V1787.300z" fill="#191919" />
        <path d="M1538.300 1588.200L1907.600 1800.800M1538.300 1602L1907.600 1814.700L1925 1804.500" />
        {[[1583.4, 1591.4], [1657, 1633.9], [1730.7, 1676.3], [1804.4, 1719], [1878.5, 1761.6], [1678.4, 1518], [2061, 1570], [2135.4, 1613.5]].map(([x, y]) => (
          <Screw key={x} x={x} y={y} />
        ))}
        <path d="M1694 1536Q1680 1541 1680.500 1554Q1682 1566 1694 1569" fill="#181818" />

        {/* tower */}
        <path d="M1939.700 363.700V440L1996 416L2013.400 406.500z" fill="#171717" />
        <path d="M1939.700 363.700L1951.300 357L2025.400 399L2013.400 406.500z" fill="#272727" />
        <path d="M1826 483.300L1969.600 400.700L1996.400 416L1852.700 499z" fill="#272727" />
        <path d="M1767.400 463.200V1366.500L1693.400 1411V1612.700L1817.500 1683.700V527L1841 506z" fill="#1a1a1a" />
        <path d="M1767.400 463.200L1779 456.500L1852.700 499L1841 506z" fill="#272727" />
        <path d="M1817.400 527Q1819 517 1827 514.600L2043.800 389Q2050 390 2054.500 396V1588L1963 1640.800L1958 1638.800L1907.600 1666V1673.500L1835.400 1714L1823.800 1710.600L1817.500 1705.300z" fill="#151515" />
        <path d="M1817.400 527Q1819 517 1827 514.600L2043.800 389Q2050 390 2054.500 396L1963.400 448.500L1957 445.400L1907.600 474V482L1835.300 522.600Q1826 524 1823.700 532z" fill="#262626" />
        <path d="M1823.700 532V1710.600M1827 514.600L1835.300 522.600V1714M1907.600 482V1673.500" />
        <path d={rackZ} fill="#1f1f1f" />
        {range(10).map((i) => (
          <g key={i}>
            <HoleV x={1858.5} y={569 + i * 119.3} />
            <HoleV x={2031.3} y={469.5 + i * 119.3} />
          </g>
        ))}
      </g>

      {/* view cube */}
      <ellipse cx="5000" cy="285" rx="75" ry="38" fill="#1b1b1b" opacity="0.7" filter="url(#shade)" />
      <path d="M4921 190L4929 268L4992.600 312.700L5054.800 267.700L5062 190z" fill="url(#gCube)" />
      <path d="M4930 192L4992.600 231L5055 192" stroke="#5e5e5e" strokeWidth="1.500" />
      <path d="M4992.600 231V312" stroke="#5e5e5e" strokeWidth="1.500" />
      <path d="M4992.600 215L5007 222V239L4992.600 248L4978 239V222z" fill="#767a80" />
      <path d="M4921 190L4929 268" stroke="#1c1ca0" strokeWidth="2" />
      <path d="M4929 268L5004 323" stroke="#7a1a1a" strokeWidth="2" />
      <g fontFamily='"Noto Sans", sans-serif' fontWeight="700" fontSize="22" fill="#5a5e64">
        <text transform="matrix(1 0.6 0 1 4935 246)" textLength="48" lengthAdjust="spacingAndGlyphs">FRONT</text>
        <text transform="matrix(1 -0.6 0 1 5006.500 274)" textLength="43" lengthAdjust="spacingAndGlyphs">RIGHT</text>
      </g>
      <path d="M5009 322L5021 343M5021 322L5009 343" stroke="#8e1717" strokeWidth="2.800" />
    </svg>
  );
}

/* ---------- notification ---------- */

function Notification() {
  return (
    <div className="absolute left-[3513.600px] top-[67.200px] flex h-[100.800px] w-[550.400px] items-center rounded-[11px] bg-gradient-to-b from-[#e0e0e0] to-[#dadada] shadow-[0_4px_24px_4px_rgba(0,0,0,0.4)]">
      <Art x={4392} y={84} w={103} h={126}>
        <g transform="rotate(-8 4444 146)">
          <rect x="4423" y="119" width="42" height="55" fill="#fff" stroke="#d0d0d0" strokeWidth="1.500" strokeDasharray="3 2" />
          <rect x="4427" y="123" width="34" height="47" fill="url(#gMail)" />
          <path d="M4431 126c5 0 8 12 10 18c6 0 12 10 20 17c-8 2-15-3-20-7c-3 6-9 4-10 2c4-3 4-6 3-9c-5-6-6-14-3-21z" fill="#6b5133" />
          <path d="M4431 126c4 0 6 6 7 10l-6 2z" fill="#c9c2b5" />
        </g>
        <circle cx="4461" cy="162" r="13" fill="rgba(150,165,185,0.35)" stroke="#8b97a8" strokeWidth="1.500" />
        <circle cx="4461" cy="162" r="8.500" stroke="#8b97a8" strokeWidth="1.200" />
        <circle cx="4461" cy="162" r="4" fill="#3d5c8c" />
        <defs>
          <linearGradient id="gMail" x1="0" y1="0" x2="0" y2="1"><stop offset="0" stopColor="#2f74dd" /><stop offset="1" stopColor="#b5dcf8" /></linearGradient>
        </defs>
      </Art>
      <div className="flex flex-col items-start gap-[8px] font-['Inter','Roboto',sans-serif]">
        <Fit w={74} className="text-[18.400px] font-medium text-[#424242]">PayPal</Fit>
        <Fit w={386} className="text-[17.600px] font-medium text-[#424242]">Unn deg selv The Ritual of Ayurveda</Fit>
        <Fit w={565} className="text-[17.600px] text-[#4e4e4e]">Frikk Fossdal – Få en gave fra Rituals Se i nettleser E...</Fit>
      </div>
    </div>
  );
}

/* ---------- navigation bar ---------- */

function NavBar() {
  return (
    <div className="absolute bottom-[6.400px] left-[1851.200px] flex gap-[11.200px]">
      <div className="flex h-[38.400px] bg-[#c9c9c9]">
        <Art x={2314} y={2724} w={68} h={48}>
          <path d="M2333 2762v-19h-4l7.500-10.500l7.500 10.500h-4v19z" fill="#e8eef0" stroke="#3d424c" strokeWidth="1.600" />
          <path d="M2329 2744c-8 2-8 7 0 9M2344 2744c9 2 9 8-2 10h-15" stroke="#3d424c" strokeWidth="2" />
          <path d="M2331 2749v8l-6-4z" fill="#3d424c" />
          <Tri x={2362.500} y={2741.700} w={16} />
        </Art>
        <Art x={2382} y={2724} w={48} h={48}>
          <path d="M2390 2741l9-6.500l-2 5l12-4v5.500z" fill="#9da5b2" stroke="#4b515c" strokeWidth="1.400" />
          <rect x="2388.500" y="2742" width="27" height="18.500" fill="#f5f6f8" stroke="#4b515c" strokeWidth="1.500" />
          <rect x="2392.500" y="2746" width="19" height="10.500" fill="#9aa2b2" stroke="#3a3f49" strokeWidth="1.500" />
        </Art>
        <Art x={2430} y={2724} w={52} h={48}>
          <path d="M2447 2761c-2-6-7-10-7.500-14c1-3 5 0 7.500 3l-3.500-12c1-3 4-2 4.500 0l3 9l.5-13c1-2.500 4-2.500 4.500 0l.5 12.500l3-10.500c1-2.500 4-1.500 4 1l-2 11l3-7.500c1-2 4-1 3.500 1.500c-2 8-4 14-6 19z" fill="#f7f8f9" stroke="#3d424c" strokeWidth="1.500" strokeLinejoin="round" />
        </Art>
        <Art x={2482} y={2724} w={52} h={48}>
          <path d="M2510 2751l10 10" stroke="#3a3f49" strokeWidth="5" />
          <circle cx="2502" cy="2743" r="10.500" fill="#e4f0f0" stroke="#3d424c" strokeWidth="1.700" />
          <path d="M2514 2735.500h7M2517.500 2732v7M2514 2742h7" stroke="#444" strokeWidth="1.500" />
        </Art>
        <Art x={2534} y={2724} w={69} h={48}>
          <rect x="2543.500" y="2733.500" width="29" height="29" stroke="#777" strokeWidth="1.400" strokeDasharray="5 3" />
          <path d="M2562 2751l10 11" stroke="#333" strokeWidth="5" />
          <circle cx="2554" cy="2744" r="10.500" fill="#e4f0f0" stroke="#3d424c" strokeWidth="1.700" />
          <Tri x={2584} y={2741.700} w={17} />
        </Art>
      </div>
      <div className="flex h-[38.400px] bg-[#c9c9c9]">
        <Art x={2617} y={2724} w={64} h={48}>
          <path d="M2637 2756h6l1 3l5 3h-18l5-3z" fill="#eee" stroke="#444" strokeWidth="1.200" />
          <rect x="2625.500" y="2732.500" width="29" height="23.500" fill="#f4f4f6" stroke="#33363d" strokeWidth="1.600" />
          <rect x="2628.500" y="2735.500" width="23" height="17" fill="#9cbfe6" stroke="#2b4f86" strokeWidth="1.600" />
          <Tri x={2660} y={2741.700} w={17} />
        </Art>
        <Art x={2681} y={2724} w={62} h={48}>
          <rect x="2688" y="2733.500" width="28" height="28" fill="url(#gPaper)" stroke="#33363d" strokeWidth="1.600" />
          <path d="M2692 2734v27M2696 2734v27M2700 2734v27M2704 2734v27M2708 2734v27M2712 2734v27M2688 2737.500h28M2688 2741.500h28M2688 2745.500h28M2688 2749.500h28M2688 2753.500h28M2688 2757.500h28" stroke="#62666f" strokeWidth="1" />
          <Tri x={2722.500} y={2741.700} w={17} />
        </Art>
        <Art x={2743} y={2724} w={61} h={48}>
          <rect x="2749.500" y="2735.500" width="28" height="24" fill="#9cbfe6" stroke="#2b4f86" strokeWidth="2" />
          <path d="M2763.500 2735v25M2749 2747.500h29" stroke="#2b4f86" strokeWidth="2" />
          <rect x="2753" y="2738.500" width="7" height="6" stroke="#5c81b4" />
          <rect x="2767" y="2738.500" width="7" height="6" stroke="#5c81b4" />
          <rect x="2753" y="2750.500" width="7" height="6" stroke="#5c81b4" />
          <rect x="2767" y="2750.500" width="7" height="6" stroke="#5c81b4" />
          <Tri x={2784} y={2741.700} w={17} />
        </Art>
      </div>
    </div>
  );
}

/* ---------- timeline ---------- */

const stepArt = {
  c: (
    <g strokeLinejoin="round">
      <path d="M9 19q0-2 2-4l5-5q1-1 3-1h17q3 0 3 3v17q0 2-1 3l-5 5q-1 2-3 2h-18q-3 0-3-3z" fill="#e3e5ea" stroke="#3a3e45" strokeWidth="2" />
      <path d="M10.500 18l7-7.500h19l-6.500 7.500z" fill="#fff" />
      <path d="M31 19l7-7v17l-7 8z" fill="#c9ccd4" />
    </g>
  ),
  s: (
    <>
      <rect x="9.200" y="9.200" width="29.600" height="29.600" fill="url(#gStep)" stroke="#000" strokeWidth="2.400" />
      <path d="M16.500 14v19.500h17" stroke="#111" strokeWidth="2.400" />
      <path d="M34 12l5 2l-13 15l-5 2l1-5z" fill="#eab58a" stroke="#6a4a20" strokeWidth="0.800" />
      <path d="M34 8h7l-1 5l-8 10l-5-3z" fill="#f9d90c" />
      <path d="M41 9l-9 14" stroke="#ec9a10" strokeWidth="1.800" />
      <path d="M20 32l2-6l3 2z" fill="#000" />
    </>
  ),
  e: (
    <>
      <path d="M9 16q0-2 2-3l2-3q1-1 2-1h10q3 0 3 3v18q0 2-1 3l-3 4q-1 2-3 2h-9q-3 0-3-3z" fill="#9cbfe6" stroke="#2d4a78" strokeWidth="2" />
      <path d="M10.500 15l4-5h12l-4 5z" fill="#d5e5f5" />
      <path d="M22.500 16l4.500-5v18l-4.500 6z" fill="#6487b8" />
      <path d="M10 33h12v5h-12z" fill="#cfd3db" />
      <path d="M35 38v-26" stroke="#444" strokeWidth="2" />
      <path d="M30.500 15l4.500-7l4.500 7z" fill="#444" />
    </>
  ),
  l: (
    <>
      <rect x="9" y="9" width="30" height="30" rx="4" fill="#e9eaee" stroke="#3a3e45" strokeWidth="2" />
      <g transform="rotate(-50 24 24)" stroke="#505050" strokeWidth="3.200">
        <rect x="11" y="20" width="15" height="8" rx="4" />
        <rect x="22" y="20" width="15" height="8" rx="4" />
      </g>
    </>
  ),
  p: (
    <g strokeWidth="2.200">
      <path d="M18 14h12M13 20v9" stroke="#444" />
      <path d="M18 34h12M35 20v9" stroke="#23406e" />
      <rect x="9" y="9" width="9" height="10" rx="2" fill="#eee" stroke="#333" />
      <rect x="30" y="9" width="9" height="10" rx="2" fill="#9cbfe6" stroke="#23406e" />
      <rect x="9" y="29" width="9" height="10" rx="2" fill="#9cbfe6" stroke="#23406e" />
      <rect x="30" y="29" width="9" height="10" rx="2" fill="#9cbfe6" stroke="#23406e" />
    </g>
  ),
  m: (
    <>
      <path d="M10 12l4-3h10v13l-4 3h-10z" fill="#d6d6d6" stroke="#8c8c8c" strokeWidth="1.600" />
      <path d="M24 26l4-3h10v12l-4 4h-10z" fill="#f2f2f2" stroke="#333" strokeWidth="2" />
      <path d="M11 27v4h5M15 27v10M12 32l3.500 5l4-5" stroke="#f00000" strokeWidth="2.600" />
    </>
  ),
};

/* c component, s sketch, e extrude, l link, p pattern, m move */
const STEPS = "cscececececesee" + "ls" + "cececcepsesecseecmscece";

function Timeline() {
  return (
    <div className="flex h-[80px] items-start bg-[#cdcdcd]">
      <Art x={0} y={2780} w={284} h={100}>
        <g fill="#4f4f4f">
          <path d="M22 2808h3v28h-3zM46 2808v28l-20-14z" />
          <path d="M90 2808v28l-20-14zM92.500 2816h3.500v12h-3.500z" />
          <path d="M122 2806v32l24-16z" />
          <path d="M171 2816h3v12h-3zM176 2808v28l20-14z" />
          <path d="M222 2808v28l20-14zM243 2808h3v28h-3z" />
        </g>
      </Art>
      <div className="relative mt-[16px] flex flex-col">
        <svg width="0" height="0" className="absolute">
          <defs>
            <linearGradient id="gStep" x1="1" y1="0" x2="0" y2="1"><stop offset="0.500" stopColor="#f2f7fc" /><stop offset="1" stopColor="#4b94d6" /></linearGradient>
          </defs>
        </svg>
        <div className="flex h-[38.400px]">
          <div className="h-[38.400px] w-[38.400px] rounded-[3px] bg-[#e6e61e]">
            <Art w={48} h={48}>
              {[9, 20.5, 32].map((x) => (
                <rect key={x} x={x} y="19" width="7" height="12.500" fill="#bcd6ee" stroke="#27405f" strokeWidth="2.200" />
              ))}
            </Art>
          </div>
          {STEPS.split("").map((s, i) => (
            <Art key={i} w={48} h={48}>{stepArt[s]}</Art>
          ))}
        </div>
        <Art x={284} y={2846} w={1968} h={24} className="mt-[-1.600px]">
          <path d="M314 2858h1915" stroke="#666" strokeWidth="4" />
          <path d={range(40).map((i) => `M${356 + i * 48} 2848v10`).join("")} stroke="#666" strokeWidth="3.600" />
          <rect x="296" y="2847.500" width="18" height="18" rx="3" fill="#d5dae4" stroke="#5b5f68" strokeWidth="2.500" />
          <path d="M299.500 2856.500h11M305 2851v11" stroke="#111" strokeWidth="2.200" />
        </Art>
        <Art x={2236} y={2796} w={32} h={66} className="absolute right-[-12.800px] top-[-3.200px]">
          <path d="M2239.500 2796h25v9l-9 10v45h-3.500v-45l-12.500-10z" fill="#666" />
        </Art>
      </div>
      <Art x={5060} y={2780} w={60} h={100} className="ml-auto">
        <path d={gearPath(5095.5, 2820, 11, 16, 8)} fill="#4f4f4f" />
        <circle cx="5095.500" cy="2820" r="6.500" stroke="#cdcdcd" strokeWidth="3" />
      </Art>
    </div>
  );
}

export default function App() {
  return (
    <div className="relative flex h-[2304px] w-[4096px] flex-col overflow-hidden bg-[#323232] font-['Noto_Sans','Open_Sans',sans-serif]">
      <Header />
      <Tabs />
      <div className="relative flex-1 overflow-hidden bg-[#323232]">
        <Model />
        <div className="relative">
          <Toolbar />
          <div className="ml-[6.400px] mt-[6.400px] flex gap-[7.200px]">
            <PanelHead title="BROWSER" tw={98} wide />
            <PanelHead title="COMMENTS" tw={123.500} plus />
          </div>
          <Tree />
        </div>
        <NavBar />
      </div>
      <Timeline />
      <Notification />
    </div>
  );
}
